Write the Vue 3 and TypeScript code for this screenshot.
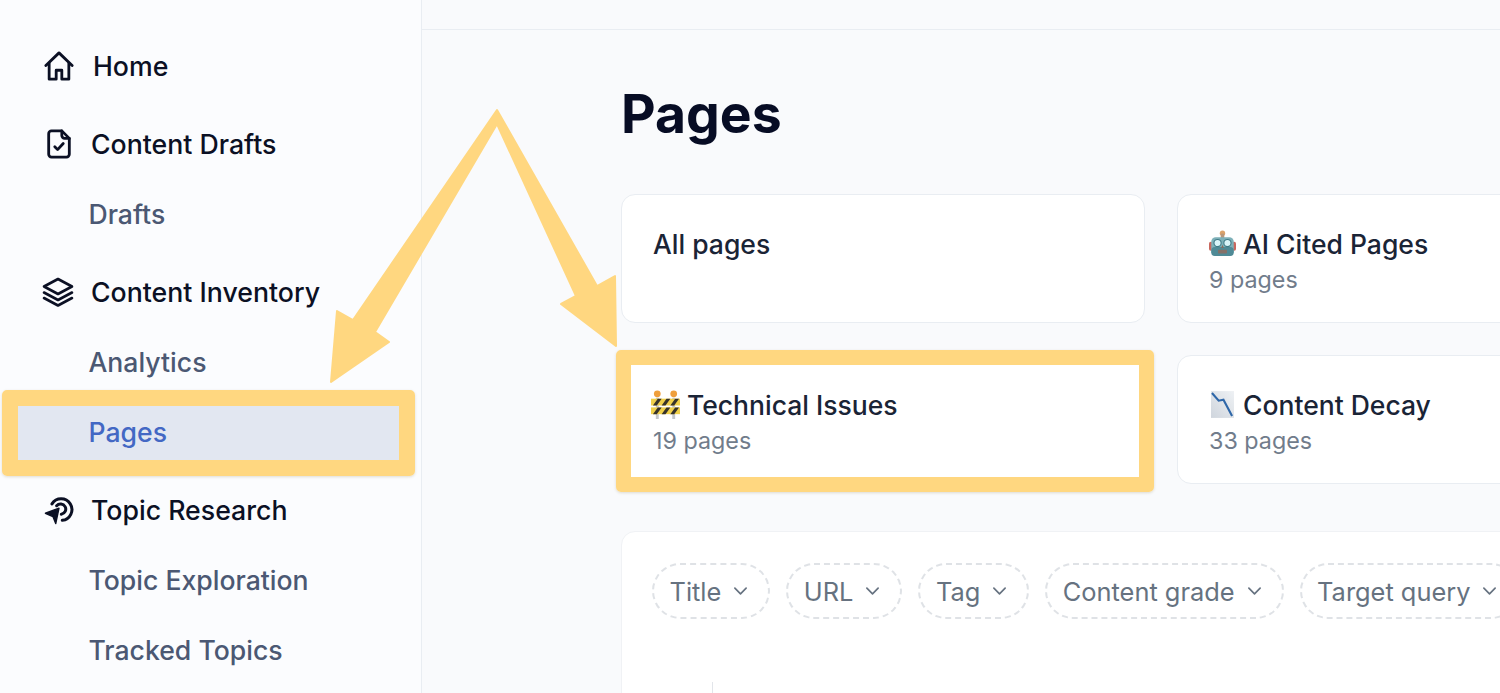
<template>
  <div class="app">
    <aside class="sidebar">
      <template v-for="group in nav" :key="group.title">
        <div class="nav-head" :class="group.cls">
          <svg class="nav-icon" viewBox="0 0 32 32" fill="none" stroke="#0b1024" stroke-width="3" stroke-linecap="round" stroke-linejoin="round">
            <template v-if="group.icon == 'home'">
              <path d="M2 15.500 16 2l14 13.500" />
              <path d="M5.500 13v17h7.500v-9.500h6V30h7.500V13" />
            </template>
            <template v-else-if="group.icon == 'doc'">
              <path d="M19 2H8a3 3 0 0 0-3 3v22a3 3 0 0 0 3 3h16a3 3 0 0 0 3-3V10z" />
              <path d="M19 2v5a3 3 0 0 0 3 3h5" />
              <path d="m11.500 19 3 3 6-6.500" />
            </template>
            <template v-else-if="group.icon == 'layers'">
              <path d="M16 3 2 10.500l14 7.500 14-7.500z" stroke-width="2.600" />
              <path d="m2 16.500 14 7.500 14-7.500" stroke-width="2.600" />
              <path d="m2 22 14 7.500L30 22" stroke-width="2.600" />
            </template>
            <template v-else>
              <path d="M8.500 9.500A11.500 11.500 0 1 1 19.500 27" stroke-width="3.200" />
              <path d="M13.500 11.500a5.500 5.500 0 1 1 5 9" stroke-width="3.200" />
              <path d="M1.500 19.500 16 14l-3.500 16.500-3-7.500z" fill="#0b1024" stroke-width="1.500" />
            </template>
          </svg>
          <span>{{ group.title }}</span>
        </div>
        <a v-for="item in group.items" :key="item" class="nav-item" :class="{ active: item == 'Pages' }">{{ item }}</a>
      </template>
    </aside>

    <main class="main">
      <div class="topbar"></div>
      <div class="content">
        <h1>Pages</h1>
        <div class="cards">
          <div v-for="card in cards" :key="card.title" class="card">
            <div class="card-title">
              <svg v-if="card.emoji == 'barrier'" class="emoji barrier" viewBox="0 0 30 30">
                <rect x="5" y="8" width="3" height="22" fill="#c4c6c8" />
                <rect x="22" y="8" width="3" height="22" fill="#c4c6c8" />
                <circle cx="6.500" cy="4" r="3.500" fill="#ef9f3c" />
                <circle cx="23.500" cy="4" r="3.500" fill="#ef9f3c" />
                <rect x="0" y="9" width="30" height="7" fill="#f0d04a" />
                <rect x="0" y="18" width="30" height="7" fill="#f0d04a" />
                <path d="M2 16 7 9h4l-5 7zm9 0 5-7h4l-5 7zm9 0 5-7h4l-5 7zM2 25l5-7h4l-5 7zm9 0 5-7h4l-5 7zm9 0 5-7h4l-5 7z" fill="#37332a" />
              </svg>
              <svg v-else-if="card.emoji == 'robot'" class="emoji robot" viewBox="0 0 30 30">
                <circle cx="15" cy="3.500" r="3" fill="#dca26a" />
                <rect x="13" y="4" width="4" height="5" fill="#b9977a" />
                <rect x="0" y="13" width="4" height="10" rx="2" fill="#c9675e" />
                <rect x="26" y="13" width="4" height="10" rx="2" fill="#c9675e" />
                <rect x="2.500" y="8" width="25" height="21" rx="5" fill="#7db0b8" />
                <rect x="2.500" y="19" width="25" height="10" rx="4" fill="#4f8a96" />
                <circle cx="9.500" cy="14.500" r="4" fill="#d8f4f8" stroke="#3f7a86" stroke-width="1.200" />
                <circle cx="20.500" cy="14.500" r="4" fill="#d8f4f8" stroke="#3f7a86" stroke-width="1.200" />
                <path d="M15 16.500 13.500 20h3z" fill="#8a6a5c" />
                <rect x="10" y="22" width="10" height="4" rx="1" fill="#857168" />
              </svg>
              <svg v-else-if="card.emoji == 'chart'" class="emoji chart" viewBox="0 0 24 28">
                <defs>
                  <linearGradient id="decayBg" x1="1" y1="0" x2="0" y2="1">
                    <stop offset="0" stop-color="#eef1f4" />
                    <stop offset="1" stop-color="#cfd5dd" />
                  </linearGradient>
                </defs>
                <rect width="24" height="28" fill="url(#decayBg)" />
                <path d="M1 2 8 10l5-1 9 17" fill="none" stroke="#2f67a8" stroke-width="2.200" />
              </svg>
              <span>{{ card.title }}</span>
            </div>
            <div v-if="card.count" class="card-count">{{ card.count }}</div>
          </div>
        </div>
        <section class="panel">
          <div class="filters">
            <button v-for="f in filters" :key="f" class="chip">
              {{ f }}
              <svg viewBox="0 0 16 10" fill="none" stroke="#667280" stroke-width="1.800" stroke-linecap="round" stroke-linejoin="round">
                <path d="m2 2 6 6 6-6" />
              </svg>
            </button>
          </div>
          <div class="axis"></div>
        </section>
      </div>
    </main>

    <!-- annotations drawn over the screenshot -->
    <div class="mark mark-nav"></div>
    <div class="mark mark-card"></div>
    <svg class="arrows" viewBox="0 0 1500 693" fill="#ffd780" stroke="#ffd780" stroke-width="2" stroke-linejoin="round">
      <path d="M497 110 597 286 615 276 616 346 561 304 576 296 497 124 375 332 389 342 331 382 337 311 353 320z" />
    </svg>
  </div>
</template>

<script setup lang="ts">
const nav = [
  { title: 'Home', icon: 'home', cls: 'home', items: [] as string[] },
  { title: 'Content Drafts', icon: 'doc', cls: 'drafts', items: ['Drafts'] },
  { title: 'Content Inventory', icon: 'layers', cls: 'inventory', items: ['Analytics', 'Pages'] },
  { title: 'Topic Research', icon: 'topic', cls: 'topic', items: ['Topic Exploration', 'Tracked Topics'] }
]

const cards = [
  { title: 'All pages', count: '', emoji: '' },
  { title: 'AI Cited Pages', count: '9 pages', emoji: 'robot' },
  { title: 'Technical Issues', count: '19 pages', emoji: 'barrier' },
  { title: 'Content Decay', count: '33 pages', emoji: 'chart' }
]

const filters = ['Title', 'URL', 'Tag', 'Content grade', 'Target query']
</script>

<style>
html,
body {
  margin: 0;
  overflow: hidden;
  background: #f9fafc;
}
</style>

<style scoped>
.app {
  position: relative;
  display: flex;
  width: 1500px;
  height: 693px;
  overflow: hidden;
  font-family: Inter, "Liberation Sans", sans-serif;
  color: #0b1024;
}

.sidebar {
  flex: none;
  box-sizing: border-box;
  width: 422px;
  height: 693px;
  padding-top: 31px;
  background: #fbfcfe;
  border-right: 1px solid #e9edf2;
}

.nav-head {
  display: flex;
  align-items: center;
  height: 70px;
  margin-top: 8px;
  padding-left: 44px;
  font-size: 26.700px;
  font-weight: 500;
  gap: 17px;
}

.nav-head.home {
  margin-top: 0;
  gap: 19px;
}

.nav-icon {
  width: 30px;
  height: 30px;
}

.inventory .nav-icon {
  width: 32px;
  height: 32px;
  margin-left: -2px;
}

.nav-item {
  display: flex;
  align-items: center;
  height: 70px;
  padding-left: 88.500px;
  font-size: 26.600px;
  font-weight: 500;
  color: #4b5873;
}

.nav-item.active {
  margin: 0 6px 0 2px;
  padding-left: 86.500px;
  color: #4368c4;
  background: #e2e7f1;
}

.main {
  flex: 1;
  min-width: 0;
}

.topbar {
  height: 29px;
  border-bottom: 1px solid #e9edf2;
}

.content {
  padding-left: 199px;
  width: 1300px;
}

h1 {
  margin: 0;
  padding-top: 51px;
  height: 115px;
  box-sizing: border-box;
  font-size: 53.500px;
  line-height: 66px;
  font-weight: 700;
  color: #070c24;
}

.cards {
  display: grid;
  grid-template-columns: 524px 524px;
  grid-auto-rows: 129px;
  gap: 32px;
  margin-top: 49px;
}

.card {
  box-sizing: border-box;
  padding: 30.500px 31px 0;
  background: #fff;
  border: 1px solid #e9edf2;
  border-radius: 14px;
}

.card-title {
  display: flex;
  align-items: center;
  gap: 7px;
  font-size: 26.500px;
  font-weight: 500;
  line-height: 36px;
  color: #1a2436;
}

.card-count {
  margin-top: 1px;
  font-size: 23.300px;
  line-height: 34px;
  color: #717c8b;
}

.emoji {
  flex: none;
  height: 29px;
}

.barrier {
  width: 29px;
  margin-left: -2px;
}

.robot {
  width: 27px;
}

.chart {
  width: 23px;
  height: 27px;
  margin-left: 2px;
  margin-right: 2px;
}

.panel {
  box-sizing: border-box;
  height: 400px;
  margin-top: 47px;
  padding: 31px 30px;
  background: #fff;
  border-radius: 14px;
  border: 1px solid #f0f2f5;
}

.filters {
  display: flex;
  gap: 16px;
}

.chip {
  display: flex;
  align-items: center;
  flex: none;
  gap: 12px;
  box-sizing: border-box;
  height: 56px;
  padding: 0 20px 0 15.500px;
  background: #fff;
  border: 2px dashed #dfe2e6;
  border-radius: 28px;
  font-family: inherit;
  font-size: 25.400px;
  font-weight: 400;
  color: #667280;
}

.chip svg {
  width: 15px;
  height: 10px;
}

.axis {
  width: 1px;
  height: 60px;
  margin-top: 63px;
  margin-left: 60px;
  background: #e2e5ea;
}

.mark {
  position: absolute;
  box-sizing: border-box;
  border: 16px solid #ffd780;
  border-radius: 5px;
  box-shadow: 0 1px 3px rgba(120, 100, 40, 0.2);
}

.mark-nav {
  left: 2px;
  top: 390px;
  width: 413px;
  height: 86px;
}

.mark-card {
  left: 616px;
  top: 350px;
  width: 538px;
  height: 142px;
  border-width: 15.500px;
}

.arrows {
  position: absolute;
  inset: 0;
  width: 1500px;
  height: 693px;
  pointer-events: none;
}
</style>
